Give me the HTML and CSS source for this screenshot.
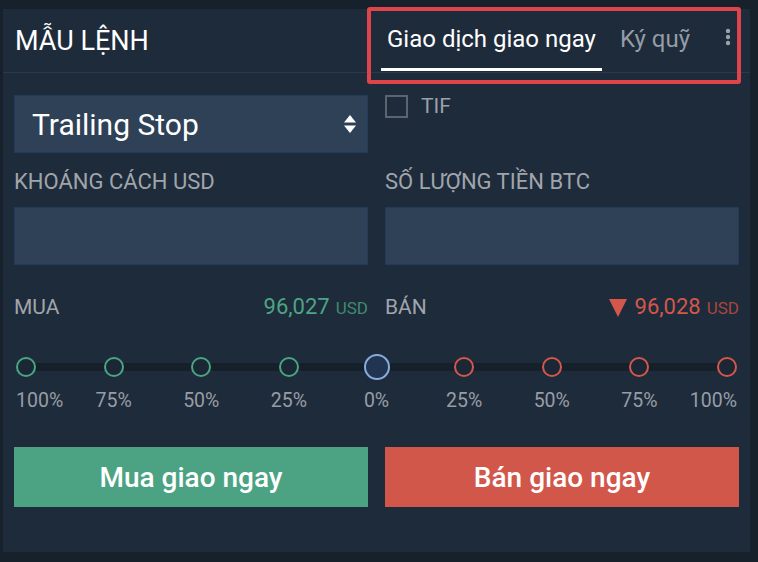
FILE: index.html
```html
<!DOCTYPE html>
<html lang="vi">
<head>
    <meta charset="UTF-8">
    <meta name="viewport" content="width=device-width, initial-scale=1.0">
    <title>Mẫu lệnh</title>
    <link rel="stylesheet" href="styles.css">
</head>
<body>
    <div class="panel">
        <div class="head">
            <h1 class="title">MẪU LỆNH</h1>
            <div class="tabs">
                <a class="tab active">Giao dịch giao ngay</a>
                <a class="tab">Ký quỹ</a>
                <span class="more">
                    <svg width="6" height="18" viewBox="0 0 6 18">
                        <circle cx="3" cy="3" r="2.2" fill="#9aa2ab"/>
                        <circle cx="3" cy="9" r="2.2" fill="#9aa2ab"/>
                        <circle cx="3" cy="15" r="2.2" fill="#9aa2ab"/>
                    </svg>
                </span>
            </div>
        </div>

        <div class="body">
            <div class="cols">
                <div class="select">
                    <span>Trailing Stop</span>
                    <svg class="updown" width="14" height="20" viewBox="0 0 14 20">
                        <path d="M7 1 L13 8.5 L1 8.5 Z" fill="#fff"/>
                        <path d="M1 11.5 L13 11.5 L7 19 Z" fill="#fff"/>
                    </svg>
                </div>
                <label class="check">
                    <span class="box"></span>
                    <span>TIF</span>
                </label>
            </div>

            <div class="cols fields">
                <div>
                    <div class="label">KHOÁNG CÁCH USD</div>
                    <div class="input"></div>
                </div>
                <div>
                    <div class="label">SỐ LƯỢNG TIỀN BTC</div>
                    <div class="input"></div>
                </div>
            </div>

            <div class="cols prices">
                <div class="price">
                    <span class="label">MUA</span>
                    <span class="val buy">96,027 <small>USD</small></span>
                </div>
                <div class="price">
                    <span class="label">BÁN</span>
                    <span class="val sell">
                        <svg width="18" height="19" viewBox="0 0 18 19"><path d="M0 1 L18 1 L9 19 Z" fill="#d4574b"/></svg>
                        96,028 <small>USD</small>
                    </span>
                </div>
            </div>

            <div class="slider">
                <span class="dot buy"></span>
                <span class="dot buy"></span>
                <span class="dot buy"></span>
                <span class="dot buy"></span>
                <span class="dot zero"></span>
                <span class="dot sell"></span>
                <span class="dot sell"></span>
                <span class="dot sell"></span>
                <span class="dot sell"></span>
            </div>
            <div class="ticks">
                <span class="first">100%</span>
                <span>75%</span>
                <span>50%</span>
                <span>25%</span>
                <span>0%</span>
                <span>25%</span>
                <span>50%</span>
                <span>75%</span>
                <span class="last">100%</span>
            </div>

            <div class="cols actions">
                <button class="btn buy">Mua giao ngay</button>
                <button class="btn sell">Bán giao ngay</button>
            </div>
        </div>

        <div class="highlight"></div>
    </div>
</body>
</html>
```

FILE: styles.css
```css
body {
    margin: 0;
    background-color: #17212c;
    font-family: Roboto, "Noto Sans", sans-serif;
    width: 758px;
    height: 562px;
    overflow: hidden;
}

.panel {
    position: relative;
    margin: 9px 0 0 3px;
    width: 747px;
    height: 543px;
    background-color: #1e2b3b;
}

.head {
    display: grid;
    grid-template-columns: 1fr 1fr;
    column-gap: 17px;
    height: 63px;
    padding: 0 11px;
    border-bottom: 1px solid #2e3945;
}

.title {
    margin: 0 0 0 1px;
    align-self: center;
    font-size: 27px;
    font-weight: 400;
    color: #fff;
}

.tabs {
    display: flex;
    align-items: stretch;
    margin-left: -4px;
}

.tab {
    display: flex;
    align-items: center;
    padding: 0 6px;
    font-size: 24px;
    color: #959ca5;
    border-bottom: 3px solid transparent;
    margin-bottom: 1px;
}

.tab.active {
    color: #fff;
    border-bottom-color: #fff;
}

.tab + .tab {
    margin-left: 12px;
}

.more {
    margin-left: auto;
    margin-right: 8px;
    padding-top: 19px;
}

.body {
    padding: 22px 11px 0;
}

.cols {
    display: grid;
    grid-template-columns: 1fr 1fr;
    column-gap: 17px;
}

.select {
    display: flex;
    align-items: center;
    justify-content: space-between;
    height: 56px;
    padding: 0 10px 0 17px;
    background-color: #2e4157;
    border: 1px solid #233b5a;
    font-size: 30px;
    color: #fff;
}

.check {
    display: flex;
    align-items: center;
    align-self: start;
    margin-top: -1px;
    font-size: 21px;
    color: #9aa1a9;
}

.box {
    width: 19px;
    height: 19px;
    border: 2px solid #5b6570;
    margin-right: 13px;
}

.label {
    font-size: 22px;
    line-height: 24px;
    color: #a0a5ab;
}

.fields {
    margin-top: 17px;
}

.input {
    margin-top: 13px;
    height: 56px;
    background-color: #2e4157;
    border: 1px solid #233b5a;
}

.prices {
    margin-top: 29px;
}

.price {
    display: flex;
    justify-content: space-between;
    align-items: center;
    line-height: 24px;
}

.price .label {
    font-size: 21px;
}

.val {
    display: flex;
    align-items: center;
    font-size: 22px;
}

.val small {
    font-size: 17px;
    margin-left: 6px;
    margin-top: 2px;
}

.val svg {
    margin-right: 8px;
}

.val.buy {
    color: #4ca584;
}

.val.buy small {
    color: #3f8a6f;
}

.val.sell {
    color: #d4574b;
}

.val.sell small {
    color: #a9463e;
}

.slider {
    display: flex;
    justify-content: space-between;
    align-items: center;
    height: 26px;
    margin-top: 34px;
    padding: 0 2px;
    background: linear-gradient(#16202b, #16202b) no-repeat center / calc(100% - 24px) 8px;
}

.dot {
    width: 16px;
    height: 16px;
    border: 2px solid;
    border-radius: 50%;
    background-color: #1b2735;
}

.dot.buy {
    border-color: #49a582;
}

.dot.sell {
    border-color: #d4574b;
}

.dot.zero {
    width: 22px;
    height: 22px;
    margin: 0 -3px;
    border-color: #86ace0;
    background-color: #213550;
}

.ticks {
    display: flex;
    justify-content: space-between;
    margin-top: 10px;
    padding: 0 2px;
    font-size: 19.5px;
    line-height: 22px;
    color: #979da5;
}

.ticks span {
    width: 20px;
    display: flex;
    justify-content: center;
    white-space: nowrap;
}

.ticks .first {
    justify-content: flex-start;
}

.ticks .last {
    justify-content: flex-end;
}

.actions {
    margin-top: 35px;
}

.btn {
    height: 60px;
    border: none;
    font-family: Roboto, sans-serif;
    font-size: 28px;
    font-weight: 500;
    color: #fff;
    cursor: pointer;
}

.btn.buy {
    background-color: #4ba383;
}

.btn.sell {
    background-color: #d2574b;
}

.highlight {
    position: absolute;
    left: 364px;
    top: -2px;
    width: 366px;
    height: 69px;
    border: 4px solid #e0444b;
    border-radius: 3px;
}
```
